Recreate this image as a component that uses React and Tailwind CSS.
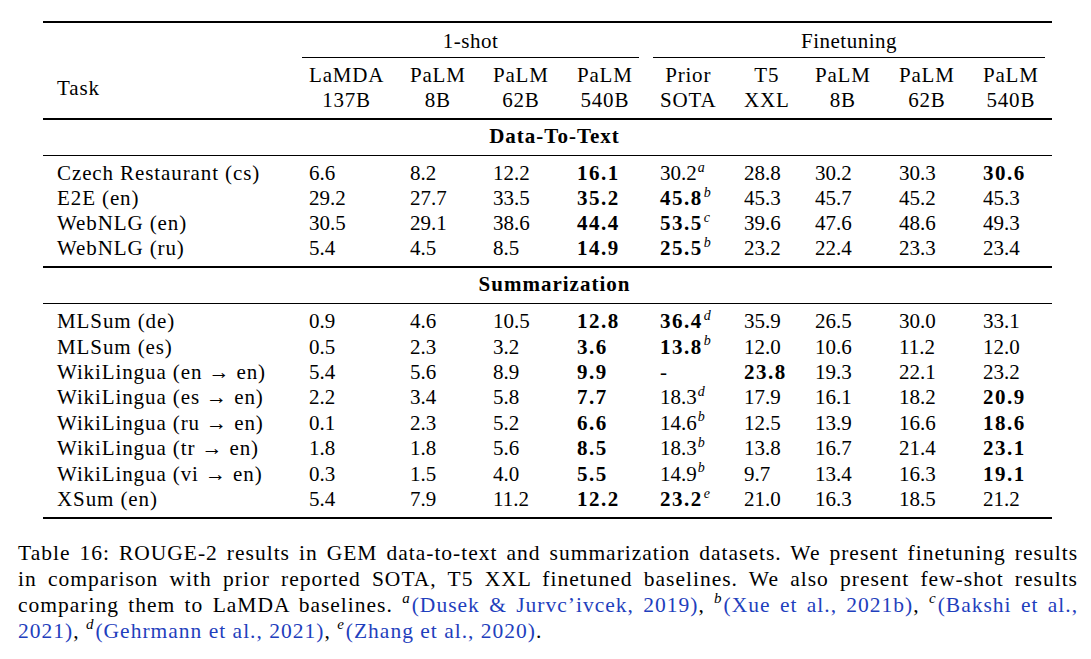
const cols = "grid grid-cols-[252px_101px_83px_84px_83px_84px_71px_84px_84px_83px]";

const dataToText = [
  ["Czech Restaurant (cs)", "6.6", "8.2", "12.2", "*16.1", "30.2|a", "28.8", "30.2", "30.3", "*30.6"],
  ["E2E (en)", "29.2", "27.7", "33.5", "*35.2", "*45.8|b", "45.3", "45.7", "45.2", "45.3"],
  ["WebNLG (en)", "30.5", "29.1", "38.6", "*44.4", "*53.5|c", "39.6", "47.6", "48.6", "49.3"],
  ["WebNLG (ru)", "5.4", "4.5", "8.5", "*14.9", "*25.5|b", "23.2", "22.4", "23.3", "23.4"],
];

const summarization = [
  ["MLSum (de)", "0.9", "4.6", "10.5", "*12.8", "*36.4|d", "35.9", "26.5", "30.0", "33.1"],
  ["MLSum (es)", "0.5", "2.3", "3.2", "*3.6", "*13.8|b", "12.0", "10.6", "11.2", "12.0"],
  ["WikiLingua (en → en)", "5.4", "5.6", "8.9", "*9.9", "-", "*23.8", "19.3", "22.1", "23.2"],
  ["WikiLingua (es → en)", "2.2", "3.4", "5.8", "*7.7", "18.3|d", "17.9", "16.1", "18.2", "*20.9"],
  ["WikiLingua (ru → en)", "0.1", "2.3", "5.2", "*6.6", "14.6|b", "12.5", "13.9", "16.6", "*18.6"],
  ["WikiLingua (tr → en)", "1.8", "1.8", "5.6", "*8.5", "18.3|b", "13.8", "16.7", "21.4", "*23.1"],
  ["WikiLingua (vi → en)", "0.3", "1.5", "4.0", "*5.5", "14.9|b", "9.7", "13.4", "16.3", "*19.1"],
  ["XSum (en)", "5.4", "7.9", "11.2", "*12.2", "*23.2|e", "21.0", "16.3", "18.5", "21.2"],
];

const headers = [
  ["LaMDA", "137B"],
  ["PaLM", "8B"],
  ["PaLM", "62B"],
  ["PaLM", "540B"],
  ["Prior", "SOTA"],
  ["T5", "XXL"],
  ["PaLM", "8B"],
  ["PaLM", "62B"],
  ["PaLM", "540B"],
];

// "*" marks a bold value, "|x" a footnote letter
function Cell({ value }) {
  let bold = value.startsWith("*");
  let text = bold ? value.slice(1) : value;
  let [num, sup] = text.split("|");
  return (
    <div className="pl-[14px] whitespace-nowrap">
      <span className={bold ? "font-bold tracking-[1.5px]" : ""}>{num}</span>
      {sup && <sup className="italic text-[14px] ml-[1px] top-[-0.6em]">{sup}</sup>}
    </div>
  );
}

function Rows({ rows, h }) {
  return (
    <div className="py-[5px]">
      {rows.map((r, i) => (
        <div key={i} className={`${cols} ${h} items-center`}>
          <div className="pl-[14px] tracking-[0.9px] whitespace-nowrap">{r[0]}</div>
          {r.slice(1).map((v, j) => (
            <Cell key={j} value={v} />
          ))}
        </div>
      ))}
    </div>
  );
}

function Cite({ s, children }) {
  return (
    <>
      <sup className="italic text-[15px] top-[-0.6em] mr-[1px]">{s}</sup>
      <span className="text-[#1f3fbd]">{children}</span>
    </>
  );
}

export default function App() {
  return (
    <div className="w-[1091px] h-[659px] bg-white text-black text-[21px] leading-[25px] font-['Liberation_Serif',serif] overflow-hidden">
      <div className="ml-[43px] w-[1009px] pt-[21px]">
        <div className="h-[2px] bg-black" />

        <div className={`${cols} h-[34px] pt-[6px]`}>
          <div />
          <div className="col-span-4 text-center tracking-[0.5px]">1-shot</div>
          <div className="col-span-5 text-center tracking-[0.5px]">Finetuning</div>
        </div>
        <div className={cols}>
          <div />
          <div className="col-span-4 mx-[7px] h-px bg-black" />
          <div className="col-span-5 mx-[7px] h-px bg-black" />
        </div>

        <div className={`${cols} pt-[5px] pb-[5px]`}>
          <div className="pl-[14px] self-center tracking-[0.9px]">Task</div>
          {headers.map(([a, b], i) => (
            <div key={i} className="pl-[14px]">
              <div className="inline-flex flex-col items-center tracking-[0.8px]">
                <span>{a}</span>
                <span>{b}</span>
              </div>
            </div>
          ))}
        </div>

        <div className="h-[1.5px] bg-black" />
        <div className="h-[35px] pb-[2px] flex items-center justify-center font-bold tracking-[1px] pl-[14px]">Data-To-Text</div>
        <div className="h-[1.5px] bg-black" />
        <Rows rows={dataToText} h="h-[25px]" />
        <div className="h-[1.5px] bg-black" />
        <div className="h-[35px] pb-[2px] flex items-center justify-center font-bold tracking-[1px] pl-[14px]">Summarization</div>
        <div className="h-[1.5px] bg-black" />
        <Rows rows={summarization} h="h-[25.4px]" />
        <div className="h-[2px] bg-black" />
      </div>

      <div className="ml-[18px] w-[1060px] mt-[21px] text-[21.5px] leading-[26px] tracking-[1px]">
        <div className="whitespace-nowrap text-justify [text-align-last:justify]">
          Table 16: ROUGE-2 results in GEM data-to-text and summarization datasets. We present finetuning results
        </div>
        <div className="whitespace-nowrap text-justify [text-align-last:justify]">
          in comparison with prior reported SOTA, T5 XXL finetuned baselines. We also present few-shot results
        </div>
        <div className="whitespace-nowrap text-justify [text-align-last:justify]">
          comparing them to LaMDA baselines. <Cite s="a">(Dusek &amp; Jurvc’ivcek, 2019)</Cite>,{" "}
          <Cite s="b">(Xue et al., 2021b)</Cite>, <Cite s="c">(Bakshi et al.,</Cite>
        </div>
        <div className="whitespace-nowrap">
          <span className="text-[#1f3fbd]">2021)</span>, <Cite s="d">(Gehrmann et al., 2021)</Cite>,{" "}
          <Cite s="e">(Zhang et al., 2020)</Cite>.
        </div>
      </div>
    </div>
  );
}
